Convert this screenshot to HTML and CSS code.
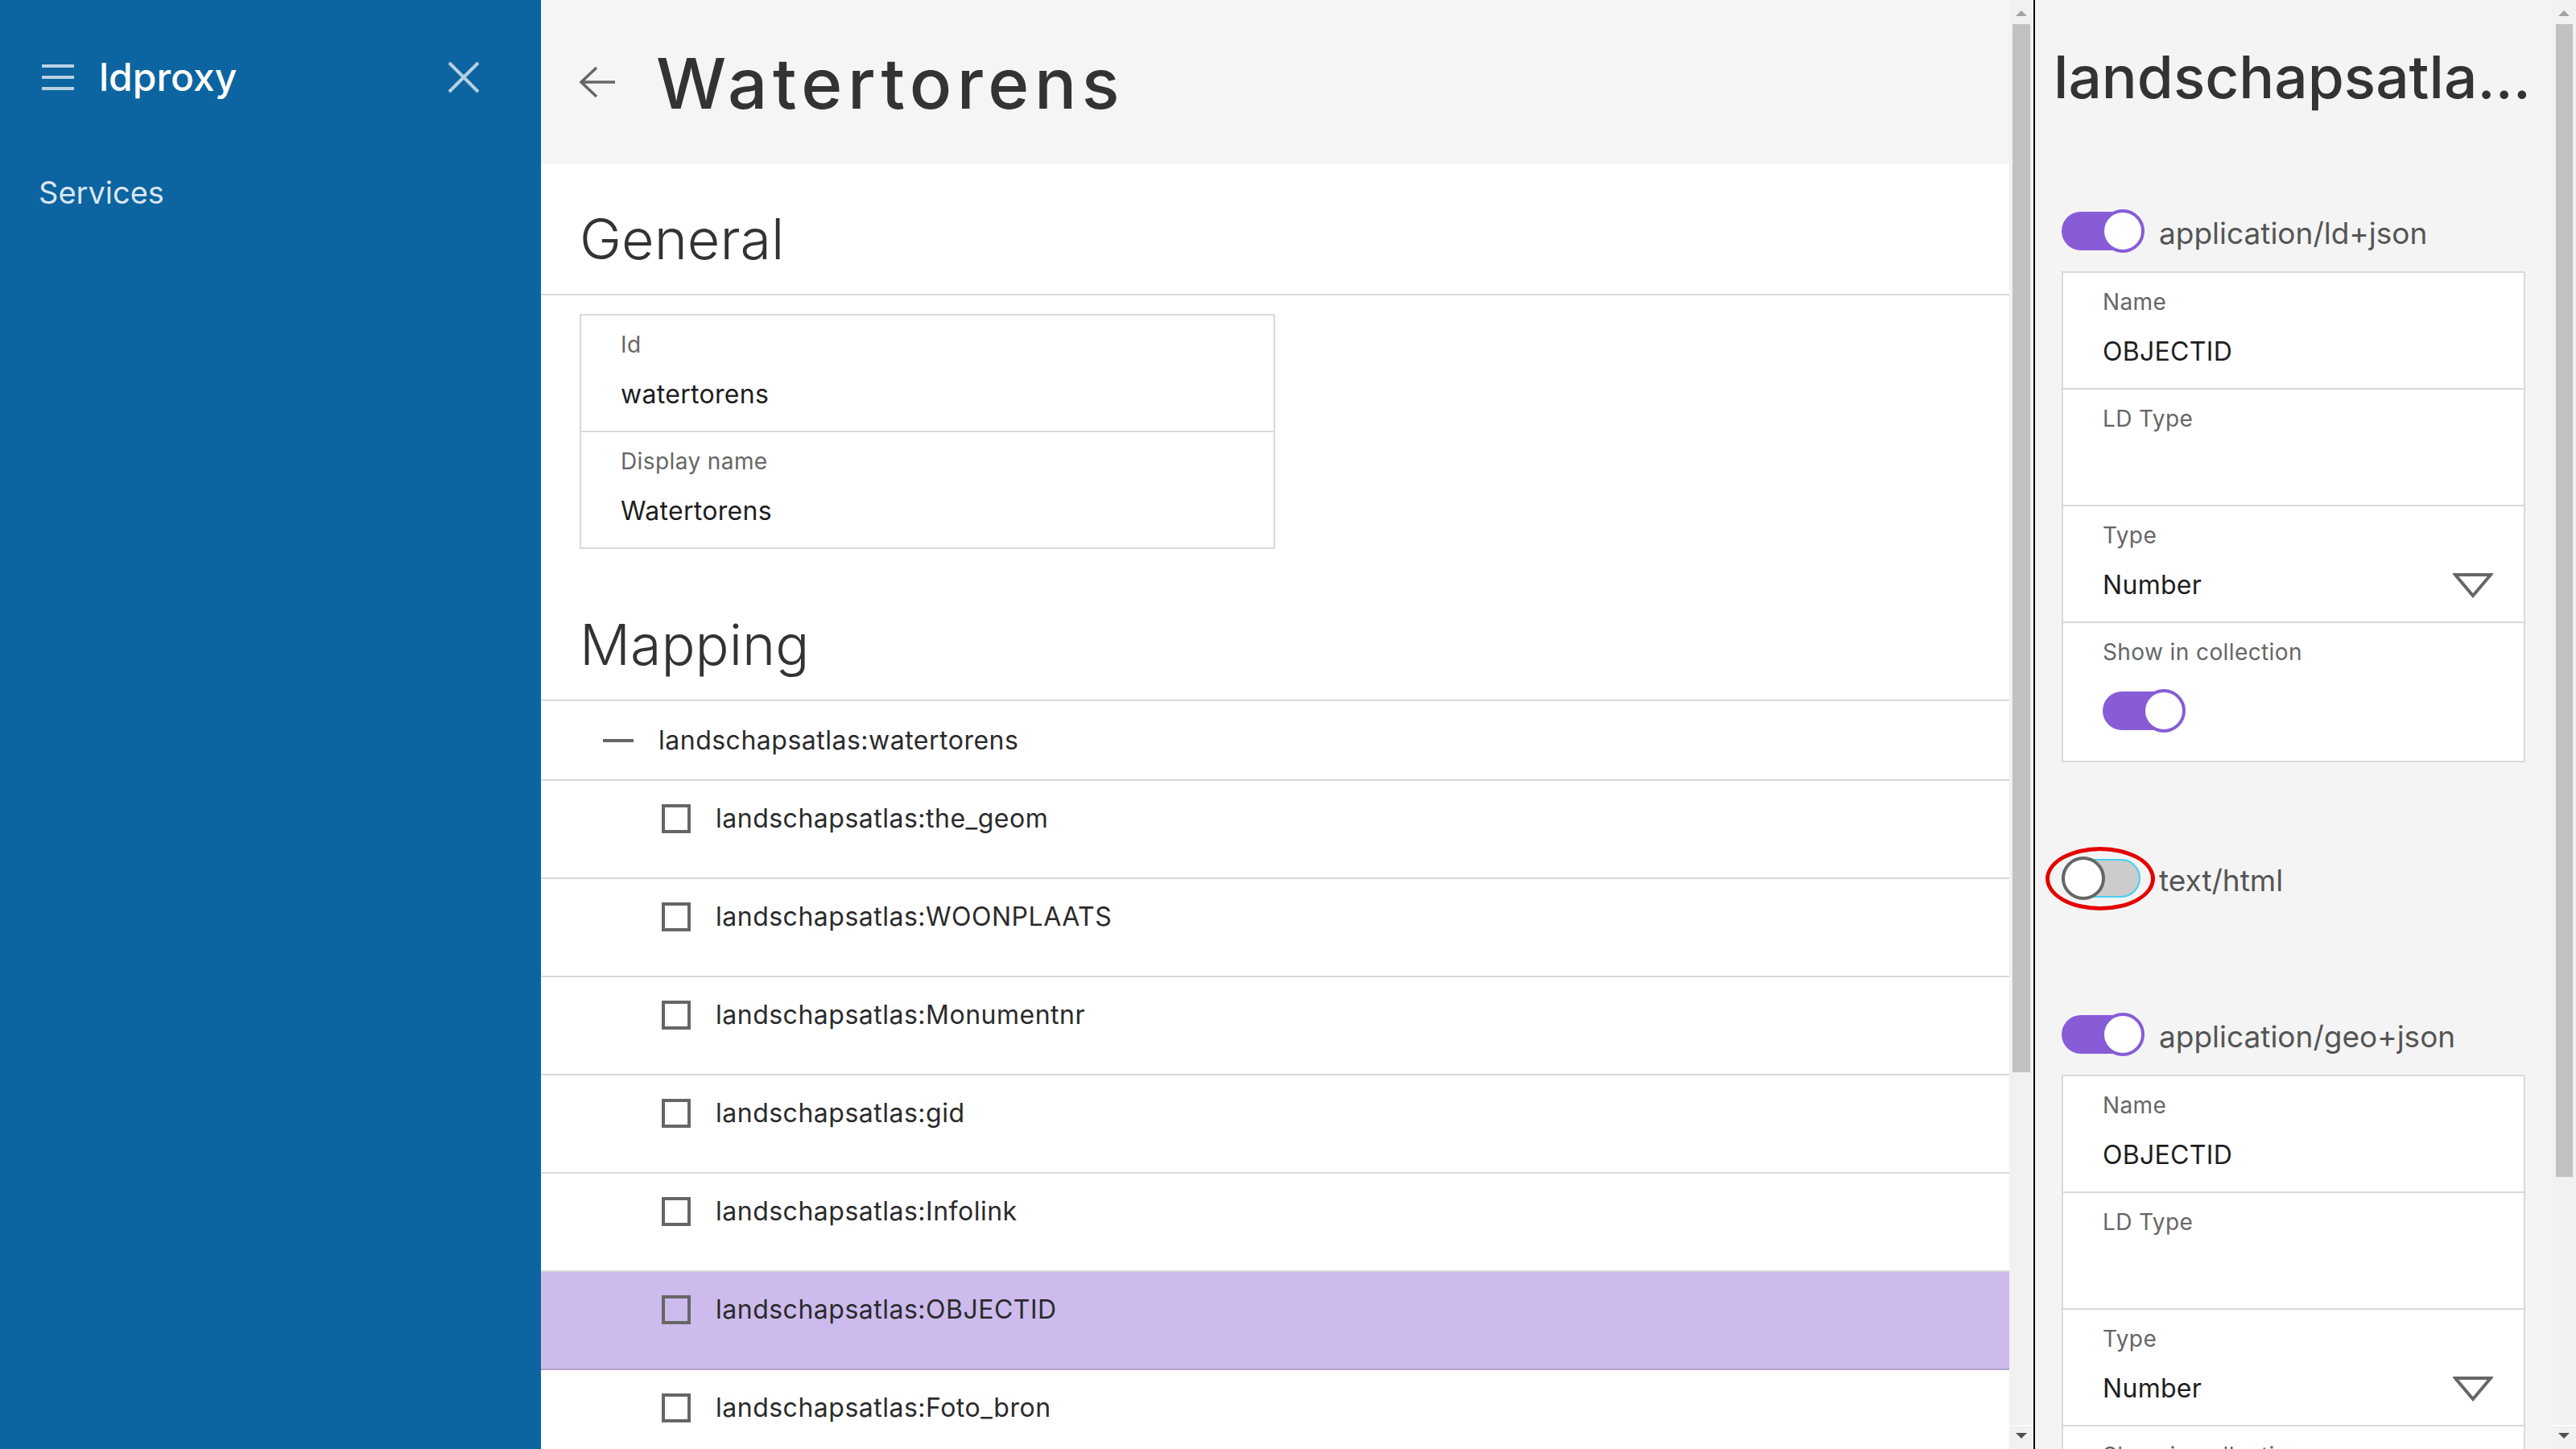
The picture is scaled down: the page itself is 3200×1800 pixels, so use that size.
FILE: index.html
```html
<!DOCTYPE html>
<html lang="nl">
<head>
<meta charset="utf-8">
<title>ldproxy – Watertorens</title>
<link rel="stylesheet" href="styles.css">
</head>
<body>
<div class="app">
  <aside class="sidebar">
    <div class="sb-head">
      <svg class="sb-menu" width="40" height="32" viewBox="0 0 40 32"><rect x="0" y="0" width="40" height="4"/><rect x="0" y="14" width="40" height="4"/><rect x="0" y="28" width="40" height="4"/></svg>
      <span class="sb-brand">ldproxy</span>
      <svg class="sb-close" width="40" height="40" viewBox="0 0 40 40"><path d="M2 2 L38 38 M38 2 L2 38"/></svg>
    </div>
    <nav class="sb-nav"><a class="sb-link">Services</a></nav>
  </aside>

  <main class="main">
    <div class="main-content">
      <header class="page-header">
        <svg class="back" width="46" height="40" viewBox="0 0 46 40"><path d="M45 20 H3 M22 2 L3 20 L22 38"/></svg>
        <h1 class="page-title">Watertorens</h1>
      </header>

      <section class="section">
        <h2 class="section-title">General</h2>
        <div class="field-box general-box">
          <div class="field">
            <div class="field-label">Id</div>
            <div class="field-value">watertorens</div>
          </div>
          <div class="field">
            <div class="field-label">Display name</div>
            <div class="field-value">Watertorens</div>
          </div>
        </div>
      </section>

      <section class="section">
        <h2 class="section-title mapping">Mapping</h2>
        <div class="tree">
          <div class="tree-root"><span class="dash"></span><span class="tree-text">landschapsatlas:watertorens</span></div>
          <div class="tree-row"><span class="checkbox"></span><span class="tree-text">landschapsatlas:the_geom</span></div>
          <div class="tree-row"><span class="checkbox"></span><span class="tree-text">landschapsatlas:WOONPLAATS</span></div>
          <div class="tree-row"><span class="checkbox"></span><span class="tree-text">landschapsatlas:Monumentnr</span></div>
          <div class="tree-row"><span class="checkbox"></span><span class="tree-text">landschapsatlas:gid</span></div>
          <div class="tree-row"><span class="checkbox"></span><span class="tree-text">landschapsatlas:Infolink</span></div>
          <div class="tree-row selected"><span class="checkbox"></span><span class="tree-text">landschapsatlas:OBJECTID</span></div>
          <div class="tree-row"><span class="checkbox"></span><span class="tree-text">landschapsatlas:Foto_bron</span></div>
        </div>
      </section>
    </div>
    <div class="scrollbar main-sb">
      <div class="sb-btn up"></div>
      <div class="sb-thumb"></div>
      <div class="sb-fill"></div>
      <div class="sb-btn down"></div>
    </div>
  </main>

  <aside class="detail">
    <div class="detail-content">
      <h2 class="detail-title">landschapsatlas:OBJECTID</h2>

      <div class="fmt">
        <div class="fmt-head">
          <div class="toggle on"><span class="toggle-track"></span><span class="toggle-knob"></span></div>
          <span class="fmt-label">application/ld+json</span>
        </div>
        <div class="field-box">
          <div class="field">
            <div class="field-label">Name</div>
            <div class="field-value">OBJECTID</div>
          </div>
          <div class="field">
            <div class="field-label">LD Type</div>
            <div class="field-value"></div>
          </div>
          <div class="field">
            <div class="field-label">Type</div>
            <div class="field-value select-value"><span>Number</span>
              <svg class="caret" width="50" height="32" viewBox="0 0 50 32"><path d="M3 3 H47 L25 29 Z"/></svg>
            </div>
          </div>
          <div class="field toggle-field">
            <div class="field-label">Show in collection</div>
            <div class="toggle on"><span class="toggle-track"></span><span class="toggle-knob"></span></div>
          </div>
        </div>
      </div>

      <div class="fmt">
        <div class="fmt-head">
          <div class="toggle off"><span class="toggle-track"></span><span class="toggle-knob"></span><span class="annot"></span></div>
          <span class="fmt-label">text/html</span>
        </div>
      </div>

      <div class="fmt">
        <div class="fmt-head">
          <div class="toggle on"><span class="toggle-track"></span><span class="toggle-knob"></span></div>
          <span class="fmt-label">application/geo+json</span>
        </div>
        <div class="field-box">
          <div class="field">
            <div class="field-label">Name</div>
            <div class="field-value">OBJECTID</div>
          </div>
          <div class="field">
            <div class="field-label">LD Type</div>
            <div class="field-value"></div>
          </div>
          <div class="field">
            <div class="field-label">Type</div>
            <div class="field-value select-value"><span>Number</span>
              <svg class="caret" width="50" height="32" viewBox="0 0 50 32"><path d="M3 3 H47 L25 29 Z"/></svg>
            </div>
          </div>
          <div class="field toggle-field">
            <div class="field-label">Show in collection</div>
            <div class="toggle on"><span class="toggle-track"></span><span class="toggle-knob"></span></div>
          </div>
        </div>
      </div>
    </div>
    <div class="scrollbar detail-sb">
      <div class="sb-btn up"></div>
      <div class="sb-thumb"></div>
      <div class="sb-fill"></div>
      <div class="sb-btn down"></div>
    </div>
  </aside>
</div>
</body>
</html>
```
FILE: styles.css
```css
* { box-sizing: border-box; margin: 0; padding: 0; }
html, body { width: 3200px; height: 1800px; overflow: hidden; }
body { font-family: Inter, "Noto Sans", sans-serif; color: #222; background: #fff; }

.app { display: flex; height: 1800px; }

/* Sidebar */
.sidebar { width: 672px; flex: none; background: #0c64a0; }
.sb-head { height: 192px; display: flex; align-items: center; padding: 0 76px 0 52px; }
.sb-menu { flex: none; fill: rgba(255,255,255,0.7); }
.sb-brand { margin-left: 31px; font-size: 48px; font-weight: 500; line-height: 1; color: #fff; }
.sb-close { flex: none; margin-left: auto; fill: none; stroke: rgba(255,255,255,0.7); stroke-width: 4; }
.sb-nav { padding: 28px 0 0 48px; }
.sb-link { font-size: 38px; line-height: 1; color: rgba(255,255,255,0.85); text-decoration: none; }

/* Main */
.main { width: 1854px; flex: none; display: flex; }
.main-content { width: 1824px; flex: none; overflow: hidden; }

.page-header { height: 204px; background: #f5f5f5; display: flex; align-items: center; padding-left: 47px; }
.back { flex: none; fill: none; stroke: #666; stroke-width: 3.5; }
.page-title { margin: 3px 0 0 50px; font-size: 87px; font-weight: 500; line-height: 1; letter-spacing: 6.5px; color: #333; }

.section-title { font-size: 70px; font-weight: 300; line-height: 1; color: #333; padding: 58px 48px 33px; border-bottom: 2px solid #d9d9d9; }
.section-title.mapping { padding-top: 84px; }

.field-box { background: #fff; border: 2px solid #d9d9d9; border-bottom: none; }
.general-box { width: 864px; margin: 23px 0 0 48px; }
.field { height: 145px; border-bottom: 2px solid #d9d9d9; padding: 22px 38px 0 49px; }
.field-label { font-size: 28px; line-height: 1; letter-spacing: 0.4px; color: #666; }
.field-value { margin-top: 32px; height: 32px; font-size: 32px; line-height: 1; letter-spacing: 0.3px; color: #1e1e1e; }
.select-value { display: flex; align-items: center; justify-content: space-between; }
.caret { flex: none; fill: none; stroke: #666; stroke-width: 4; stroke-linejoin: miter; }
.toggle-field { height: 173px; }
.toggle-field .toggle { margin-top: 31px; }

/* Tree */
.tree-root { height: 99px; border-bottom: 2px solid #d9d9d9; display: flex; align-items: center; padding-left: 77px; }
.dash { width: 38px; height: 4px; background: #666; flex: none; margin-right: 31px; }
.tree-text { font-size: 32px; line-height: 36px; letter-spacing: 0.5px; color: #2b2b2b; white-space: nowrap; }
.tree-row { height: 122px; border-bottom: 2px solid #d9d9d9; display: flex; align-items: flex-start; padding: 29px 0 0 150px; }
.tree-row.selected { background: #cdbbed; border-bottom-color: #b1a2cd; }
.checkbox { width: 36px; height: 36px; border: 4px solid #666; flex: none; margin-right: 31px; }

/* Scrollbars */
.scrollbar { width: 30px; flex: none; display: flex; flex-direction: column; background: #f1f1f1; }
.sb-btn { height: 30px; flex: none; display: flex; justify-content: center; }
.sb-btn.up { padding-top: 13px; }
.sb-btn.up::before { content: ""; width: 0; height: 0; border-left: 7px solid transparent; border-right: 7px solid transparent; border-bottom: 7px solid #a3a3a3; }
.sb-btn.down { padding-top: 8px; border-top: 2px solid #fafafa; }
.sb-btn.down::before { content: ""; width: 0; height: 0; border-left: 7px solid transparent; border-right: 7px solid transparent; border-top: 7px solid #505050; }
.sb-thumb { flex: none; margin: 0 4px; background: #c1c1c1; }
.main-sb .sb-thumb { height: 1302px; }
.detail-sb .sb-thumb { height: 1432px; margin-left: 5px; }
.sb-fill { flex: 1; }

/* Detail */
.detail { width: 674px; flex: none; display: flex; border-left: 2px solid #000; background: #f4f4f4; }
.detail-content { width: 642px; flex: none; overflow: hidden; padding: 0 33px; }
.detail-title { padding-top: 49px; margin: 0 -16px 94px -10px; font-size: 73px; font-weight: 500; line-height: 94px; color: #333; white-space: nowrap; overflow: hidden; text-overflow: ellipsis; }

.fmt { margin-bottom: 94px; }
.fmt-head { height: 100px; display: flex; align-items: center; }
.fmt-label { margin: 5px 0 0 18px; font-size: 37px; line-height: 1; color: #555; }

.toggle { position: relative; width: 103px; height: 56px; flex: none; }
.toggle-track { position: absolute; left: 0; top: 4px; width: 98px; height: 48px; border-radius: 24px; background: #875cd6; }
.toggle-knob { position: absolute; top: 1px; left: 49px; width: 54px; height: 54px; border-radius: 50%; background: #fff; border: 4px solid #875cd6; }
.toggle.off .toggle-track { background: #ccc; border: 2px solid #45cfee; }
.toggle.off .toggle-knob { left: 0; border-color: #666; }
.annot { position: absolute; left: -20px; top: -11px; width: 136px; height: 79px; border: 5px solid #e50000; border-radius: 50%; }
```
